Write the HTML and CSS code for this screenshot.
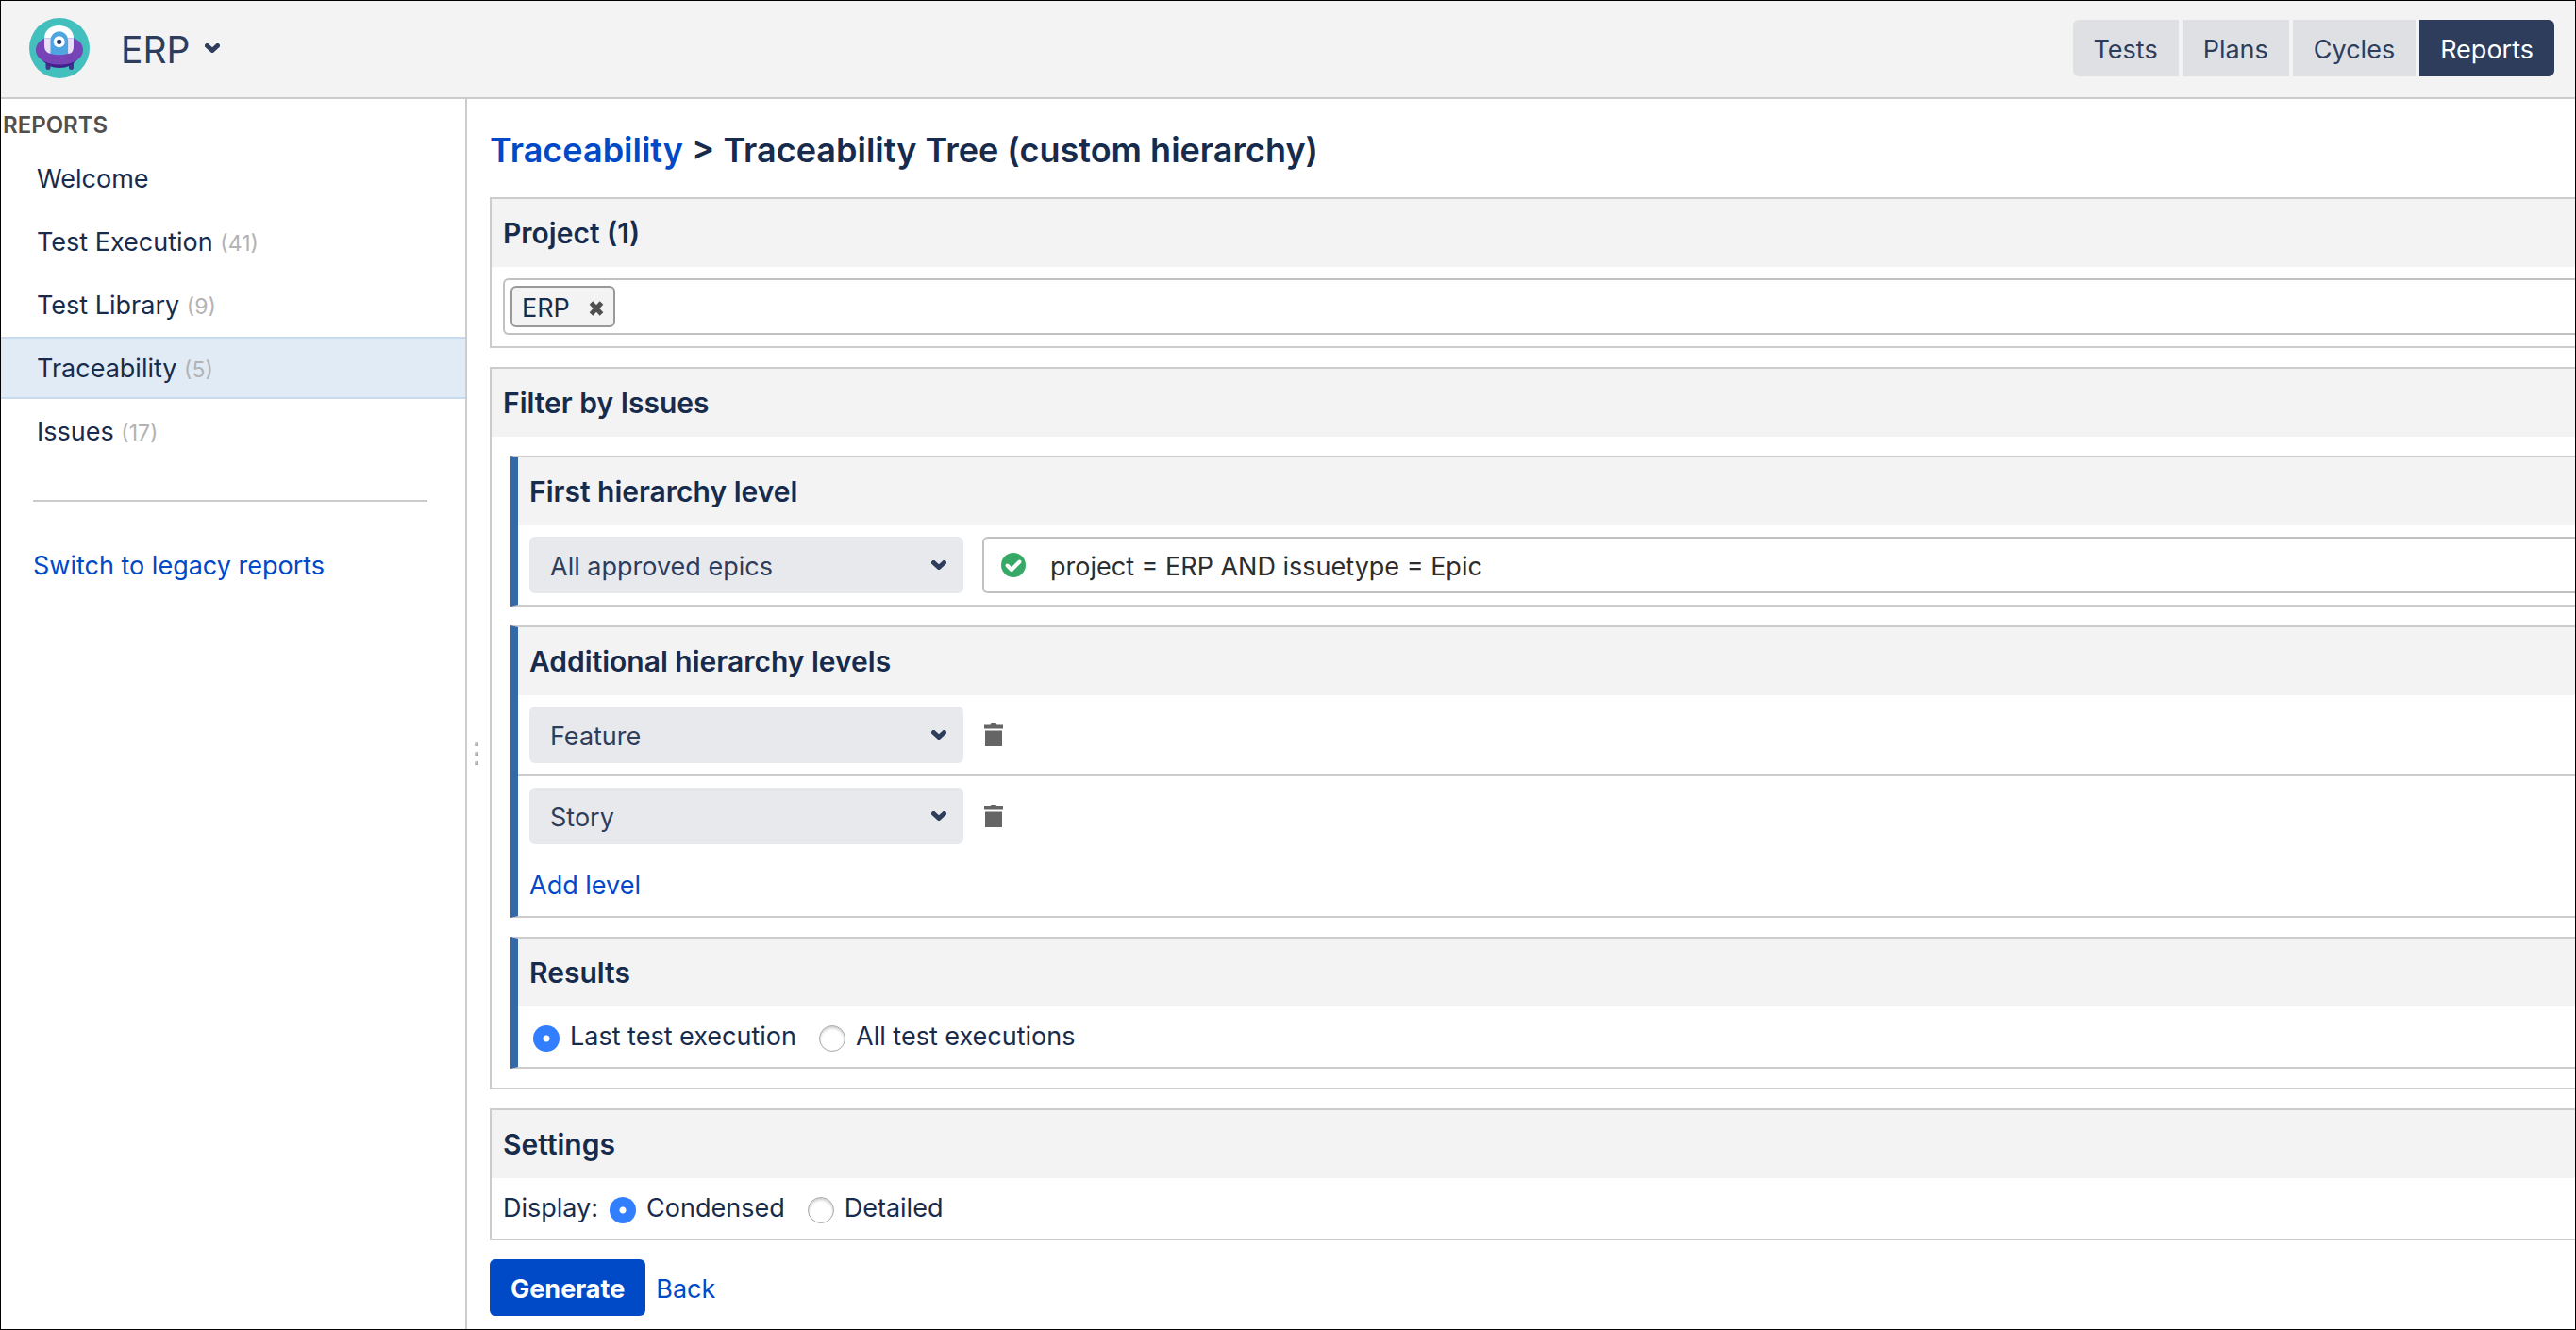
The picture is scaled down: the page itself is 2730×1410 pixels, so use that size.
FILE: index.html
```html
<!DOCTYPE html>
<html lang="en">
<head>
    <meta charset="UTF-8">
    <meta name="viewport" content="width=device-width, initial-scale=1.0">
    <title>ERP - Traceability Tree</title>
    <link rel="stylesheet" href="styles.css">
</head>
<body>

    <header class="top-bar">
        <svg class="avatar" viewBox="0 0 64 64" aria-hidden="true">
            <circle cx="32" cy="32" r="32" fill="#43bfbd"/>
            <path d="M17.500 46h5v7q0 2-2.500 2t-2.500-2zM42 46h5v7q0 2-2.500 2t-2.500-2z" fill="#403294"/>
            <path d="M12 43Q20 53 32 53T52 43z" fill="#42208a"/>
            <path d="M7 34C7 24 18 19 32 19s25 5 25 15-12 15.500-25 15.500S7 44 7 34z" fill="#7744b7"/>
            <path d="M16 21.500C16 13 23 8 31.500 8S47 13 47 21.500z" fill="#fff"/>
            <path d="M16 21.500h31V30c0 5-2 8-6 8H23c-5-1-7-4-7-9z" fill="#eadff5"/>
            <path d="M22.500 38V23.500a9.300 9.300 0 0 1 18.600 0V38q-9.300 2.500-18.600 0z" fill="#4fa5df"/>
            <circle cx="31.700" cy="25.300" r="6" fill="#fff"/>
            <circle cx="31.700" cy="25.300" r="2.600" fill="#253a66"/>
        </svg>
        <button class="project-btn">
            ERP
            <svg class="chevron" viewBox="0 0 16 10" aria-hidden="true"><path d="M2.500 2.500L8 7.500l5.500-5"/></svg>
        </button>
        <nav class="tabs">
            <a href="#tests" class="tab">Tests</a>
            <a href="#plans" class="tab">Plans</a>
            <a href="#cycles" class="tab">Cycles</a>
            <a href="#reports" class="tab active">Reports</a>
        </nav>
    </header>

    <div class="layout">
        <aside class="sidebar">
            <h3 class="sidebar-title">REPORTS</h3>
            <nav class="menu">
                <a href="#welcome" class="menu-item">Welcome</a>
                <a href="#execution" class="menu-item">Test Execution <span class="count">(41)</span></a>
                <a href="#library" class="menu-item">Test Library <span class="count">(9)</span></a>
                <a href="#traceability" class="menu-item selected">Traceability <span class="count">(5)</span></a>
                <a href="#issues" class="menu-item">Issues <span class="count">(17)</span></a>
            </nav>
            <hr class="divider">
            <a href="#legacy" class="link legacy">Switch to legacy reports</a>
        </aside>

        <div class="splitter"><i></i><i></i><i></i></div>

        <main class="content">
            <h1><a href="#traceability" class="link">Traceability</a> &gt; Traceability Tree (custom hierarchy)</h1>

            <section class="panel">
                <h2>Project (1)</h2>
                <div class="row">
                    <div class="field">
                        <span class="chip">ERP
                            <button class="chip-remove" aria-label="Remove ERP">
                                <svg viewBox="0 0 16 16" aria-hidden="true"><path d="M2.500 2l11 12M13.500 2l-11 12"/></svg>
                            </button>
                        </span>
                    </div>
                </div>
            </section>

            <section class="panel">
                <h2>Filter by Issues</h2>
                <div class="levels">
                    <section class="panel level">
                        <h2>First hierarchy level</h2>
                        <div class="row">
                            <div class="dropdown">
                                <select aria-label="First level filter">
                                    <option>All approved epics</option>
                                </select>
                                <svg class="chevron" viewBox="0 0 16 10" aria-hidden="true"><path d="M2.500 2.500L8 7.500l5.500-5"/></svg>
                            </div>
                            <div class="field query">
                                <svg class="check" viewBox="0 0 26 26" aria-hidden="true">
                                    <circle cx="13" cy="13" r="13" fill="#36a966"/>
                                    <path d="M6.500 13.500l4.500 4.500 8.500-8.500" fill="none" stroke="#fff" stroke-width="4" stroke-linecap="round" stroke-linejoin="round"/>
                                </svg>
                                <input type="text" aria-label="JQL query" value="project = ERP AND issuetype = Epic">
                            </div>
                        </div>
                    </section>

                    <section class="panel level">
                        <h2>Additional hierarchy levels</h2>
                        <div class="row">
                            <div class="dropdown">
                                <select aria-label="Second level">
                                    <option>Feature</option>
                                </select>
                                <svg class="chevron" viewBox="0 0 16 10" aria-hidden="true"><path d="M2.500 2.500L8 7.500l5.500-5"/></svg>
                            </div>
                            <button class="delete-btn" aria-label="Delete level">
                                <svg viewBox="0 0 24 24" aria-hidden="true"><path d="M2 1.500h6.500L9.500 0h5l1 1.500H22v4H2zM3 7.500h18V24H3z"/></svg>
                            </button>
                        </div>
                        <div class="row bordered">
                            <div class="dropdown">
                                <select aria-label="Third level">
                                    <option>Story</option>
                                </select>
                                <svg class="chevron" viewBox="0 0 16 10" aria-hidden="true"><path d="M2.500 2.500L8 7.500l5.500-5"/></svg>
                            </div>
                            <button class="delete-btn" aria-label="Delete level">
                                <svg viewBox="0 0 24 24" aria-hidden="true"><path d="M2 1.500h6.500L9.500 0h5l1 1.500H22v4H2zM3 7.500h18V24H3z"/></svg>
                            </button>
                        </div>
                        <div class="add-row">
                            <a href="#add" class="link">Add level</a>
                        </div>
                    </section>

                    <section class="panel level">
                        <h2>Results</h2>
                        <div class="radios">
                            <label class="radio"><input type="radio" name="results" checked>Last test execution</label>
                            <label class="radio"><input type="radio" name="results">All test executions</label>
                        </div>
                    </section>
                </div>
            </section>

            <section class="panel">
                <h2>Settings</h2>
                <div class="radios">
                    <span class="radios-title">Display:</span>
                    <label class="radio"><input type="radio" name="display" checked>Condensed</label>
                    <label class="radio"><input type="radio" name="display">Detailed</label>
                </div>
            </section>

            <div class="actions">
                <button class="generate-btn">Generate</button>
                <a href="#back" class="link">Back</a>
            </div>
        </main>
    </div>

</body>
</html>
```
FILE: styles.css
```css
* {
    box-sizing: border-box;
}

body {
    margin: 0;
    min-height: 100vh;
    display: flex;
    flex-direction: column;
    border: 1px solid #000;
    background-color: #fff;
    color: #172b4d;
    font-family: Inter, "Liberation Sans", sans-serif;
    font-size: 27px;
    line-height: 40px;
}

h1, h2, h3 {
    margin: 0;
}

a {
    text-decoration: none;
}

button, input, select {
    font: inherit;
    color: inherit;
    margin: 0;
    padding: 0;
    border: none;
    background: none;
}

button {
    cursor: pointer;
}

.link {
    color: #0049c7;
}

/* Top bar */
.top-bar {
    display: flex;
    align-items: center;
    height: 104px;
    padding: 0 22px 2px 30px;
    background-color: #f3f3f3;
    border-bottom: 2px solid #ccc;
    color: #2e3d5b;
}

.avatar {
    width: 64px;
    height: 64px;
}

.project-btn {
    display: flex;
    align-items: center;
    gap: 16px;
    margin-left: 33px;
    padding-top: 4px;
    font-size: 39px;
}

.chevron {
    width: 16px;
    height: 10px;
    fill: none;
    stroke: #2e3d5b;
    stroke-width: 5;
    stroke-linecap: round;
    stroke-linejoin: round;
}

.project-btn .chevron {
    margin-bottom: 4px;
}

.tabs {
    display: flex;
    gap: 4px;
    margin-left: auto;
}

.tab {
    height: 60px;
    padding: 12px 22px 8px;
    background-color: #dfe0e4;
    color: #2e3d5b;
}

.tab:first-child {
    border-radius: 6px 0 0 6px;
}

.tab:last-child {
    border-radius: 0 6px 6px 0;
}

.tab.active {
    background-color: #2e3d5b;
    color: #fff;
}

/* Sidebar */
.layout {
    display: flex;
    flex: 1;
}

.sidebar {
    width: 494px;
    flex-shrink: 0;
    border-right: 2px solid #ccc;
}

.sidebar-title {
    padding: 8px 2px 3px;
    color: #505050;
    font-size: 24px;
    font-weight: 600;
}

.menu-item {
    display: block;
    height: 66px;
    margin-bottom: 1px;
    padding: 12px 38px 10px;
    border: solid transparent;
    border-width: 2px 0;
    color: #172b4d;
}

.menu-item.selected {
    background-color: #e1ebf6;
    border-color: #c8daee;
}

.count {
    color: #b3b3b3;
    font-size: 23px;
}

.divider {
    margin: 40px 40px 48px 34px;
    border: none;
    border-top: 2px solid #ccc;
}

.legacy {
    display: block;
    margin-left: 34px;
}

.splitter {
    width: 24px;
    flex-shrink: 0;
    padding: 682px 8px 0;
    display: flex;
    flex-direction: column;
    gap: 6px;
}

.splitter i {
    width: 4px;
    height: 4px;
    background: linear-gradient(135deg, #ddd, #999);
}

/* Content */
.content {
    flex: 1;
    min-width: 0;
    display: flex;
    flex-direction: column;
    gap: 20px;
    overflow: hidden;
}

h1 {
    margin: 30px 0 6px;
    font-size: 36px;
    font-weight: 600;
    line-height: 48px;
}

h2 {
    padding: 16px 12px;
    background-color: #f3f3f3;
    font-size: 30px;
    font-weight: 600;
}

/* Panels run off the right edge of the page */
.panel {
    border: 2px solid #ccc;
    border-right: none;
}

.levels {
    display: flex;
    flex-direction: column;
    gap: 20px;
    padding: 20px 0 20px 20px;
}

.level {
    border-left: 8px solid #3469a6;
}

.row {
    display: flex;
    align-items: center;
    gap: 20px;
    padding: 12px 0 12px 12px;
}

.row.bordered {
    border-top: 2px solid #ccc;
}

.field {
    flex: 1;
    display: flex;
    align-items: center;
    height: 60px;
    padding: 0 6px;
    border: 2px solid #c1c1c1;
    border-right: none;
    border-radius: 6px 0 0 6px;
}

.chip {
    display: flex;
    align-items: center;
    gap: 20px;
    height: 44px;
    padding: 4px 10px 0;
    background-color: #f3f3f3;
    border: 2px solid #999;
    border-radius: 6px;
}

.chip-remove {
    display: flex;
}

.chip-remove svg {
    width: 16px;
    height: 16px;
    stroke: #505050;
    stroke-width: 5;
}

.dropdown {
    position: relative;
    width: 460px;
}

.dropdown select {
    display: block;
    width: 100%;
    height: 60px;
    padding: 4px 48px 0 22px;
    appearance: none;
    background-color: #e8e9ed;
    border-radius: 6px;
    color: #2e3d5b;
}

.dropdown .chevron {
    position: absolute;
    top: 25px;
    right: 18px;
    pointer-events: none;
}

.query {
    gap: 26px;
    padding-left: 18px;
}

.query input {
    flex: 1;
    padding-top: 4px;
    color: #2d2d2d;
    outline: none;
}

.check {
    width: 26px;
    height: 26px;
}

.delete-btn {
    display: flex;
}

.delete-btn svg {
    width: 24px;
    height: 24px;
    fill: #656565;
}

.add-row {
    padding: 12px;
}

.radios {
    display: flex;
    align-items: center;
    gap: 24px;
    height: 64px;
    padding: 0 16px;
}

.radio {
    display: flex;
    align-items: center;
    gap: 11px;
}

.radio input {
    appearance: none;
    width: 28px;
    height: 28px;
    margin-top: 4px;
    border: 1px solid #a8a8a8;
    border-radius: 50%;
    box-shadow: inset 0 2px 3px #ccc;
}

.radio input:checked {
    border: none;
    box-shadow: none;
    background: radial-gradient(circle, #fff 3px, #317eff 4px);
}

.radios-title {
    margin-left: -4px;
    margin-right: -12px;
}

.actions {
    display: flex;
    align-items: center;
    gap: 11px;
}

.generate-btn {
    height: 60px;
    padding: 4px 22px 0;
    background-color: #0049c7;
    border-radius: 6px;
    color: #fff;
    font-weight: 700;
}

.actions .link {
    padding-top: 4px;
}
```
